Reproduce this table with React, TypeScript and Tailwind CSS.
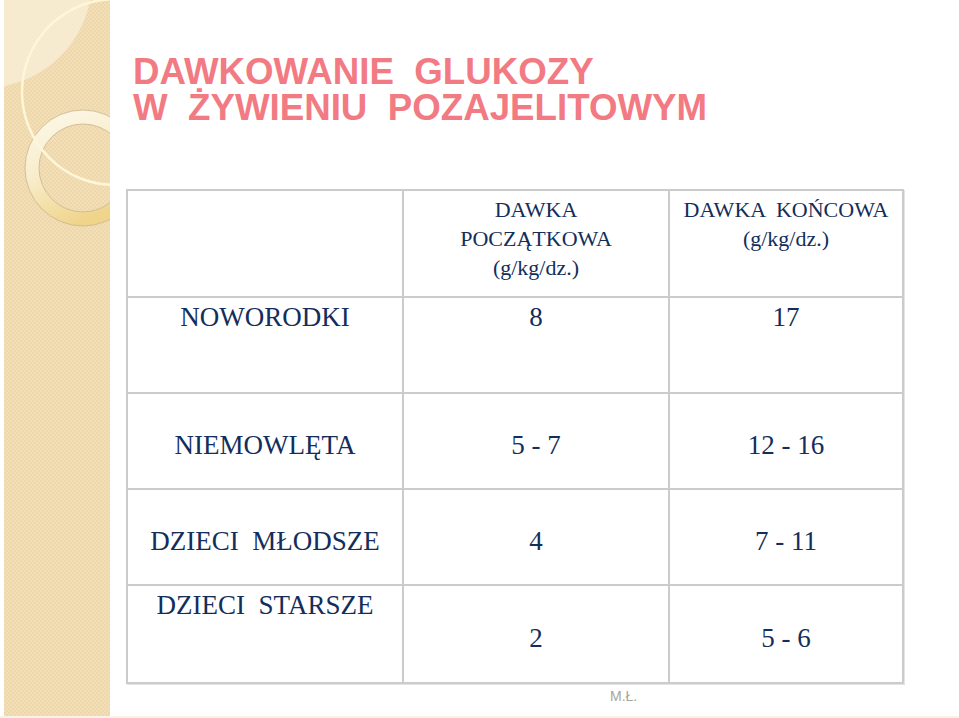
import React from "react";

const serif = { fontFamily: '"Liberation Serif", "Times New Roman", serif' };

type Row = {
  label: string;
  start: string;
  end: string;
  top?: boolean;
  labelTop?: boolean;
};

const rows: Row[] = [
  { label: "NOWORODKI", start: "8", end: "17", top: true },
  { label: "NIEMOWLĘTA", start: "5 - 7", end: "12 - 16" },
  { label: "DZIECI  MŁODSZE", start: "4", end: "7 - 11" },
  { label: "DZIECI  STARSZE", start: "2", end: "5 - 6", labelTop: true },
];

function SidePanel() {
  return (
    <div className="w-[106px] h-[716px] ml-[4px] shrink-0">
      <svg width="106" height="716" viewBox="0 0 106 716">
        <defs>
          <pattern id="dots" width="4" height="4" patternUnits="userSpaceOnUse">
            <rect width="4" height="4" fill="#f2dfb8" />
            <rect x="0" y="0" width="2" height="2" fill="#eed7aa" />
            <rect x="2" y="2" width="2" height="2" fill="#eed7aa" />
          </pattern>
          <linearGradient id="ring" x1="0" y1="0" x2="0.4" y2="1">
            <stop offset="0" stopColor="#fdf9ee" />
            <stop offset="0.55" stopColor="#f8ecc8" />
            <stop offset="1" stopColor="#efd48a" />
          </linearGradient>
        </defs>
        <rect width="106" height="716" fill="url(#dots)" />
        <circle cx="-20" cy="-20" r="108" fill="#faf1dc" opacity="0.7" />
        <path
          fillRule="evenodd"
          d="M 137 168 A 58 58 0 1 0 21 168 A 58 58 0 1 0 137 168 Z M 123 168 A 44 44 0 1 1 35 168 A 44 44 0 1 1 123 168 Z"
          fill="url(#ring)"
          stroke="#c9b58e"
          strokeWidth="0.8"
        />
        <circle cx="111" cy="92" r="93" fill="none" stroke="#fff6d8" strokeWidth="2.5" />
      </svg>
    </div>
  );
}

export default function App() {
  return (
    <div className="w-[959px] h-[718px] bg-white flex flex-col overflow-hidden">
      <div className="flex flex-1">
        <SidePanel />
        <div className="flex flex-col flex-1">
          <h1
            className="pl-[23px] pt-[54px] text-[36.7px] leading-[36px] font-bold text-[#f27a82] whitespace-pre"
            style={{ fontFamily: '"Liberation Sans", Arial, sans-serif' }}
          >
            {"DAWKOWANIE  GLUKOZY\nW  ŻYWIENIU  POZAJELITOWYM"}
          </h1>

          <div
            className="ml-[16px] mt-[63px] w-[778px] grid grid-cols-[274px_264px_232px] grid-rows-[105px_94px_94px_94px_96px] gap-[2px] border-2 border-[#cbcbcb] bg-[#cbcbcb] text-[#132e5b] shadow-[1px_1px_0_#e4e4e4]"
            style={serif}
          >
            <div className="bg-white" />
            <div className="bg-white pt-[4px] text-center text-[22px] leading-[29px]">
              DAWKA
              <br />
              POCZĄTKOWA
              <br />
              (g/kg/dz.)
            </div>
            <div className="bg-white pt-[4px] text-center text-[22px] leading-[29px] whitespace-pre">
              {"DAWKA  KOŃCOWA\n(g/kg/dz.)"}
            </div>

            {rows.map((r) => (
              <React.Fragment key={r.label}>
                <div
                  className={
                    r.top || r.labelTop
                      ? "bg-white pt-[4px] text-center text-[27px] leading-[31px] whitespace-pre"
                      : "bg-white pt-[8px] flex items-center justify-center text-[27px] leading-[31px] whitespace-pre"
                  }
                >
                  {r.label}
                </div>
                <div
                  className={
                    r.top
                      ? "bg-white pt-[4px] text-center text-[27px] leading-[31px]"
                      : "bg-white pt-[8px] flex items-center justify-center text-[27px] leading-[31px]"
                  }
                >
                  {r.start}
                </div>
                <div
                  className={
                    r.top
                      ? "bg-white pt-[4px] text-center text-[27px] leading-[31px]"
                      : "bg-white pt-[8px] flex items-center justify-center text-[27px] leading-[31px]"
                  }
                >
                  {r.end}
                </div>
              </React.Fragment>
            ))}
          </div>

          <div
            className="ml-[500px] mt-[4px] text-[14px] leading-[16px] text-[#a9a59b]"
            style={{ fontFamily: '"Liberation Sans", Arial, sans-serif' }}
          >
            M.Ł.
          </div>
        </div>
      </div>
      <div className="h-[2px] bg-[#f8f3e6]" />
    </div>
  );
}
